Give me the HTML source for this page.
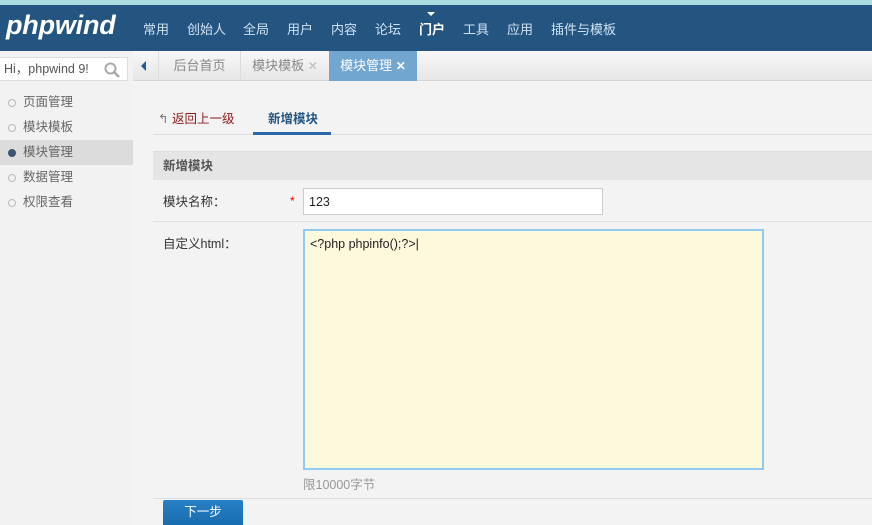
<!DOCTYPE html>
<html><head><meta charset="utf-8"><style>
*{margin:0;padding:0;box-sizing:border-box}
body{width:872px;height:525px;overflow:hidden;background:#f3f3f3;font-family:"Liberation Sans","Noto Sans CJK SC",sans-serif;font-size:12px;color:#333;position:relative}
.abs{position:absolute}
#top{left:0;top:0;width:872px;height:5px;background:#acdbe0}
#nav{left:0;top:5px;width:872px;height:46px;background:#245580}
#logo{left:6px;top:10px;color:#fff;font-size:27px;font-weight:bold;font-style:italic;letter-spacing:-0.2px}
.ni{top:19px;color:#cfe2f3;font-size:13px}
#tabbar{left:133px;top:51px;width:739px;height:30px;background:linear-gradient(#f8f8f8,#e6e6e6);border-bottom:1px solid #d6d6d6}
.tab{top:51px;height:30px;line-height:29px;font-size:13px;color:#888;border-left:1px solid #ddd;text-align:center}
#side{left:0;top:51px;width:133px;height:474px;background:#f2f2f2}
#search{left:0;top:57px;width:128px;height:24px;background:#fff;border:1px solid #ddd;border-left:none;font-size:12.5px;line-height:22px;padding-left:4px;color:#555}
.si{left:0;width:133px;height:25px;line-height:25px;padding-left:23px;color:#666;font-size:12.5px}
.si:before{content:"";position:absolute;left:8px;top:9px;width:6px;height:6px;border:1px solid #bbb;border-radius:50%}
.si.on{background:#dcdcdc}
.si.on:before{background:#3b5573;border-color:#3b5573}
</style></head><body>
<div class="abs" id="top"></div>
<div class="abs" id="nav"></div>
<div class="abs" id="logo">phpwind</div>
<div class="abs ni" style="left:143px">常用</div>
<div class="abs ni" style="left:187px">创始人</div>
<div class="abs ni" style="left:243px">全局</div>
<div class="abs ni" style="left:287px">用户</div>
<div class="abs ni" style="left:331px">内容</div>
<div class="abs ni" style="left:375px">论坛</div>
<div class="abs ni" style="left:419px;color:#fff;font-weight:bold">门户</div>
<div class="abs" style="left:427px;top:12px;border-left:4px solid transparent;border-right:4px solid transparent;border-top:4px solid #fff"></div>
<div class="abs ni" style="left:463px">工具</div>
<div class="abs ni" style="left:507px">应用</div>
<div class="abs ni" style="left:551px">插件与模板</div>
<div class="abs" id="side"></div>
<div class="abs" id="search">Hi，phpwind 9!
<svg class="abs" style="left:104px;top:4px" width="16" height="16"><circle cx="6.5" cy="6.5" r="5" fill="none" stroke="#aaa" stroke-width="2"/><line x1="10" y1="10" x2="15" y2="15" stroke="#aaa" stroke-width="2.5"/></svg></div>
<div class="abs" id="tabbar"></div>
<div class="abs" style="left:141px;top:61px;border-top:5px solid transparent;border-bottom:5px solid transparent;border-right:5px solid #1d5a9a"></div>
<div class="abs tab" style="left:158px;width:82px">后台首页</div>
<div class="abs tab" style="left:240px;width:89px">模块模板 <span style="color:#bbb;font-size:12px">✕</span></div>
<div class="abs tab" style="left:329px;width:88px;background:#71a6d1;color:#fff;border:none">模块管理 <b style="font-size:12px">✕</b></div>
<div class="abs si" style="top:90px">页面管理</div>
<div class="abs si" style="top:115px">模块模板</div>
<div class="abs si on" style="top:140px">模块管理</div>
<div class="abs si" style="top:165px">数据管理</div>
<div class="abs si" style="top:190px">权限查看</div>
<div class="abs" style="left:153px;top:134px;width:719px;height:1px;background:#ddd"></div>
<div class="abs" style="left:158px;top:108px;color:#8b1c1c;font-size:12.5px"><span style="color:#777">↰</span> 返回上一级</div>
<div class="abs" style="left:268px;top:108px;color:#245580;font-size:12.5px;font-weight:bold">新增模块</div>
<div class="abs" style="left:253px;top:132px;width:78px;height:3px;background:#2a66a8"></div>
<div class="abs" style="left:153px;top:151px;width:719px;height:29px;background:#e5e5e5;border-top:1px solid #ddd;line-height:28px;padding-left:10px;font-weight:bold;color:#555;font-size:12.5px">新增模块</div>
<div class="abs" style="left:163px;top:191px;font-size:12.5px">模块名称：</div>
<div class="abs" style="left:290px;top:194px;color:#e00">*</div>
<div class="abs" style="left:303px;top:188px;width:300px;height:27px;background:#fff;border:1px solid #ccc;padding:6px 5px;font-size:12.5px;color:#222">123</div>
<div class="abs" style="left:153px;top:221px;width:719px;height:1px;background:#e0e0e0"></div>
<div class="abs" style="left:163px;top:233px;font-size:12.5px">自定义html：</div>
<div class="abs" style="left:303px;top:229px;width:461px;height:241px;background:#fef9dc;border:2px solid #8fcaf0;padding:6px 5px;font-size:12.5px;color:#222">&lt;?php phpinfo();?&gt;|</div>
<div class="abs" style="left:303px;top:474px;color:#999;font-size:12.5px">限10000字节</div>
<div class="abs" style="left:153px;top:498px;width:719px;height:1px;background:#dcdcdc"></div>
<div class="abs" style="left:163px;top:500px;width:80px;height:25px;background:linear-gradient(#2a80c4,#176cb0);color:#fff;text-align:center;line-height:25px;font-size:12.5px;border-radius:2px 2px 0 0">下一步</div>
</body></html>
